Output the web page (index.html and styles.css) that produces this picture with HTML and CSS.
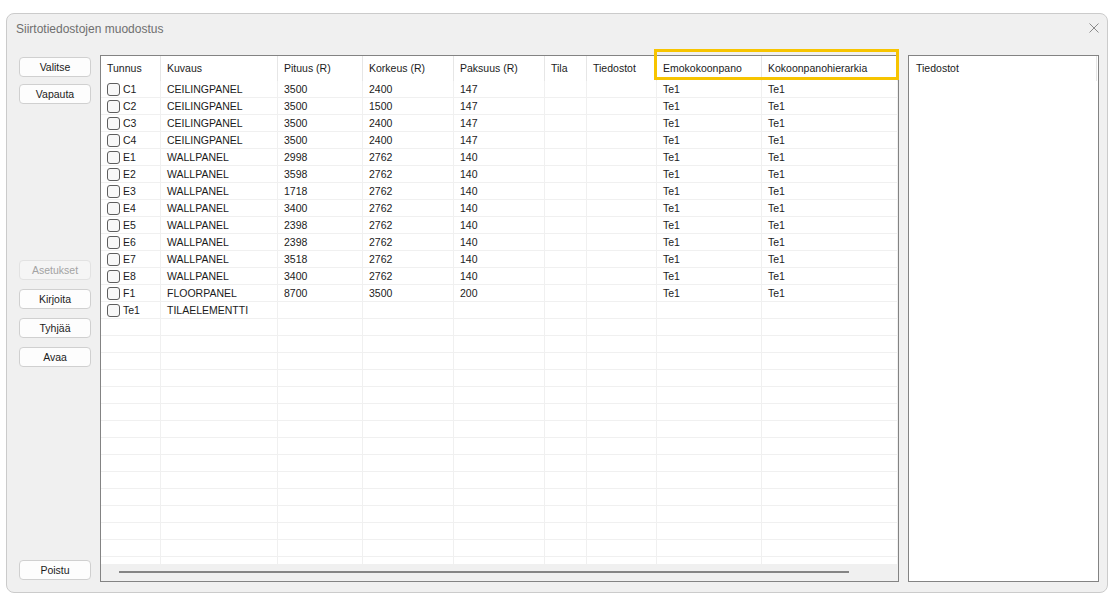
FILE: index.html
```
<!DOCTYPE html>
<html lang="fi">
<head>
    <meta charset="UTF-8">
    <title>Siirtotiedostojen muodostus</title>
    <link rel="stylesheet" href="styles.css">
</head>
<body>
    <div class="window">
        <div class="titlebar">
            <span class="title">Siirtotiedostojen muodostus</span>
            <svg class="close" width="10" height="10" viewBox="0 0 10 10">
                <path d="M0.5 0.5 L9.5 9.5 M9.5 0.5 L0.5 9.5" stroke="#8a8a8a" stroke-width="1" fill="none"/>
            </svg>
        </div>

        <div class="content">
            <!-- Action buttons -->
            <div class="actions">
                <button class="btn">Valitse</button>
                <button class="btn">Vapauta</button>
                <button class="btn group-start" disabled>Asetukset</button>
                <button class="btn">Kirjoita</button>
                <button class="btn">Tyhjää</button>
                <button class="btn">Avaa</button>
                <button class="btn bottom">Poistu</button>
            </div>

            <!-- Element grid -->
            <div class="grid">
                <div class="row head">
                    <div class="cell">Tunnus</div>
                    <div class="cell">Kuvaus</div>
                    <div class="cell">Pituus (R)</div>
                    <div class="cell">Korkeus (R)</div>
                    <div class="cell">Paksuus (R)</div>
                    <div class="cell">Tila</div>
                    <div class="cell">Tiedostot</div>
                    <div class="cell">Emokokoonpano</div>
                    <div class="cell">Kokoonpanohierarkia</div>
                </div>
                <div class="grid-body" id="gridBody"></div>
                <div class="hscroll"><div class="thumb"></div></div>
                <div class="highlight"></div>
            </div>

            <!-- Files list -->
            <div class="files">
                <div class="files-head">Tiedostot</div>
            </div>
        </div>
    </div>

    <script>
        const elements = [
            ['C1', 'CEILINGPANEL', '3500', '2400', '147'],
            ['C2', 'CEILINGPANEL', '3500', '1500', '147'],
            ['C3', 'CEILINGPANEL', '3500', '2400', '147'],
            ['C4', 'CEILINGPANEL', '3500', '2400', '147'],
            ['E1', 'WALLPANEL', '2998', '2762', '140'],
            ['E2', 'WALLPANEL', '3598', '2762', '140'],
            ['E3', 'WALLPANEL', '1718', '2762', '140'],
            ['E4', 'WALLPANEL', '3400', '2762', '140'],
            ['E5', 'WALLPANEL', '2398', '2762', '140'],
            ['E6', 'WALLPANEL', '2398', '2762', '140'],
            ['E7', 'WALLPANEL', '3518', '2762', '140'],
            ['E8', 'WALLPANEL', '3400', '2762', '140'],
            ['F1', 'FLOORPANEL', '8700', '3500', '200']
        ];

        // Build element rows, then pad with empty rows to fill the grid
        const body = document.getElementById('gridBody');
        let html = elements.map(el =>
            `<div class="row">
                <div class="cell id"><span class="check"></span>${el[0]}</div>
                <div class="cell">${el[1]}</div>
                <div class="cell">${el[2]}</div>
                <div class="cell">${el[3]}</div>
                <div class="cell">${el[4]}</div>
                <div class="cell"></div>
                <div class="cell"></div>
                <div class="cell">Te1</div>
                <div class="cell">Te1</div>
            </div>`
        ).join('');

        html += `<div class="row">
            <div class="cell id"><span class="check"></span>Te1</div>
            <div class="cell">TILAELEMENTTI</div>
            ${'<div class="cell"></div>'.repeat(7)}
        </div>`;

        for (let i = 0; i < 15; i++) {
            html += `<div class="row">${'<div class="cell"></div>'.repeat(9)}</div>`;
        }
        body.innerHTML = html;
    </script>
</body>
</html>
```

FILE: styles.css
```
body {
    margin: 0;
    background: #fff;
    font-family: "Liberation Sans", Arial, sans-serif;
    font-size: 10.5px;
    color: #1b1b1b;
}
.window {
    margin: 13px 0 0 6px;
    width: 1102px;
    height: 580px;
    box-sizing: border-box;
    border: 1px solid #cbcbcb;
    border-radius: 8px;
    background: #f0f0f0;
    display: flex;
    flex-direction: column;
}
.titlebar {
    flex-shrink: 0;
    height: 41px;
    box-sizing: border-box;
    padding: 8px 8px 0 9px;
    display: flex;
    justify-content: space-between;
    align-items: flex-start;
}
.title {
    font-size: 12px;
    line-height: 14px;
    color: #6f6f6f;
}
.close {
    margin-top: 1px;
}
.content {
    flex: 1;
    min-height: 0;
    display: flex;
    padding: 0 8px 10px 12px;
}
.actions {
    width: 72px;
    margin-right: 9px;
    padding: 2px 0;
    display: flex;
    flex-direction: column;
}
.btn {
    width: 72px;
    height: 20px;
    margin: 0 0 7px 0;
    padding: 0;
    border: 1px solid #d0d0d0;
    border-radius: 4px;
    background: #fdfdfd;
    font: inherit;
    color: #1b1b1b;
}
.btn:disabled {
    color: #a3a3a3;
    background: #f5f5f5;
    border-color: #e2e2e2;
}
.group-start {
    margin-top: 149px;
    margin-bottom: 9px;
}
.group-start ~ .btn {
    margin-bottom: 9px;
}
.btn.bottom {
    margin-top: auto;
    margin-bottom: 0;
}
.grid {
    position: relative;
    width: 799px;
    box-sizing: border-box;
    border: 1px solid #838383;
    background: #fff;
    display: flex;
    flex-direction: column;
}
.row {
    display: grid;
    grid-template-columns: 60px 117px 85px 91px 91px 42px 70px 105px 1fr;
    height: 17px;
    flex-shrink: 0;
    box-sizing: border-box;
    border-bottom: 1px solid #f0f0f0;
}
.cell {
    padding-left: 6px;
    line-height: 16px;
    border-right: 1px solid #f0f0f0;
    white-space: nowrap;
    overflow: hidden;
}
.row.head {
    height: 25px;
    border-bottom: none;
}
.row.head .cell {
    line-height: 25px;
    border-right-color: #e6e6e6;
}
.cell.id {
    display: flex;
    align-items: center;
}
.check {
    width: 13px;
    height: 13px;
    box-sizing: border-box;
    border: 1px solid #5e5e5e;
    border-radius: 3px;
    background: #f8f8f8;
    margin-right: 3px;
}
.grid-body {
    flex: 1;
    min-height: 0;
    overflow: hidden;
}
.hscroll {
    flex-shrink: 0;
    height: 17px;
    background: #f0f0f0;
    padding-top: 7px;
    box-sizing: border-box;
}
.thumb {
    margin-left: 18px;
    width: 730px;
    height: 2px;
    background: #858585;
}
.highlight {
    position: absolute;
    left: 553px;
    top: -7px;
    width: 245px;
    height: 31px;
    box-sizing: border-box;
    border: 3px solid #f7c400;
}
.files {
    width: 191px;
    margin-left: 9px;
    box-sizing: border-box;
    border: 1px solid #838383;
    background: #fff;
}
.files-head {
    height: 25px;
    line-height: 25px;
    padding-left: 7px;
    margin-right: 1px;
    border-right: 1px solid #e6e6e6;
}
```
